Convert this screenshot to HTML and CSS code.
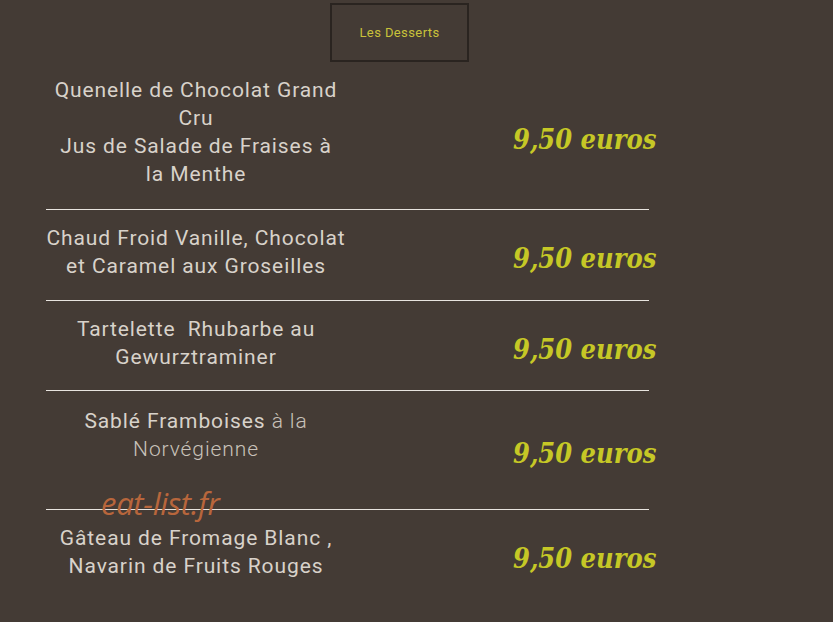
FILE: index.html
```html
<!DOCTYPE html>
<html lang="fr">
<head>
<meta charset="utf-8">
<title>Les Desserts</title>
<link rel="stylesheet" href="styles.css">
</head>
<body>
<div class="page">
	<div class="title"><span>Les Desserts</span></div>
	<div class="menu">
		<div class="row">
			<div class="dish">Quenelle de Chocolat Grand<br>Cru<br>Jus de Salade de Fraises à<br>la Menthe</div>
			<div class="price">9,50 euros</div>
		</div>
		<div class="row">
			<div class="dish">Chaud Froid Vanille, Chocolat<br>et Caramel aux Groseilles</div>
			<div class="price">9,50 euros</div>
		</div>
		<div class="row">
			<div class="dish">Tartelette&nbsp; Rhubarbe au<br>Gewurztraminer</div>
			<div class="price">9,50 euros</div>
		</div>
		<div class="row row_tall">
			<div class="dish">Sablé Framboises <span class="light">à la<br>Norvégienne</span></div>
			<div class="price">9,50 euros</div>
		</div>
		<div class="row row_last">
			<div class="dish">Gâteau de Fromage Blanc ,<br>Navarin de Fruits Rouges</div>
			<div class="price">9,50 euros</div>
		</div>
		<div class="mark">eat-list.fr</div>
	</div>
</div>
</body>
</html>
```

FILE: styles.css
```css
*{ padding:0; margin:0;}
html,body{ background:#443b35; height:100%;}
body{ font-family:Roboto, "DejaVu Sans", sans-serif; color:#d8d2ca;}

.page{ padding:3px 0 0 46px;}
.title{ width:135px; height:55px; margin-left:284px; border:2px solid #2a2420; display:flex; align-items:center; justify-content:center;}
.title span{ font-size:13px; color:#c9c23a; letter-spacing:0.4px;}

.menu{ width:603px; position:relative;}
.row{ display:flex; border-bottom:1px solid #e8e4df;}
.dish{ flex:none; width:320px; margin-left:-10px; text-align:center; font-size:21px; letter-spacing:0.9px; line-height:28px; padding:14px 0 20px; white-space:nowrap;}
.price{ flex:none; align-self:center; margin-left:157px; padding-top:8px; font-family:"DejaVu Serif", serif; font-stretch:condensed; font-weight:bold; font-style:italic; font-size:27px; line-height:30px; color:#c6c826; white-space:nowrap;}
.row:first-child .dish{ padding-bottom:21px;}
.row:nth-child(3) .dish{ padding-bottom:19px;}
.row_tall .dish{ padding:16px 0 46px;}
.row_last{ border-bottom:0;}
.light{ font-weight:300; color:#c9c2ba;}

.mark{ position:absolute; left:55px; top:420px; font-family:"Open Sans", sans-serif; font-style:italic; font-size:31px; color:#b8663c; letter-spacing:-0.3px;}
```
